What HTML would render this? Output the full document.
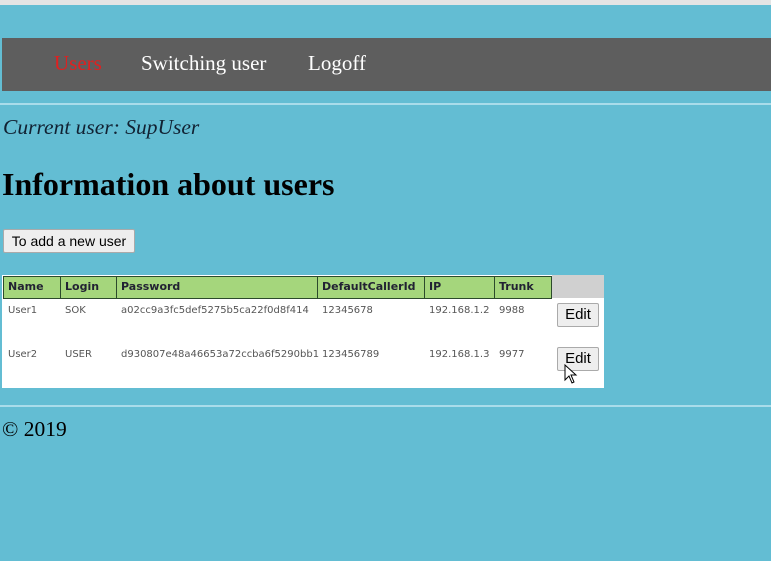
<html><head><style>
body{margin:0;width:771px;height:561px;background:#63bdd3;position:relative;overflow:hidden;font-family:"Liberation Serif",serif}
.a{position:absolute}
.t{font-family:"DejaVu Sans",sans-serif;font-size:10px;color:#555}
.h{font-family:"DejaVu Sans",sans-serif;font-size:11px;font-weight:bold;color:#223;background:#a5d67c;border:1px solid #2c4a2c;box-sizing:border-box;height:23px;top:276px;padding:3px 4px}
.b{font-family:"Liberation Sans",sans-serif;font-size:14px;background:#eee;border:1px solid #aaa;border-radius:2px;box-sizing:border-box;text-align:center}
</style></head><body>
<div class="a" style="left:0;top:0;width:771px;height:5px;background:#e4e4e4"></div>
<div class="a" style="left:2px;top:38px;width:769px;height:53px;background:#5e5e5e"></div>
<div class="a" style="left:54px;top:51px;font-size:21px;color:#e02020">Users</div>
<div class="a" style="left:141px;top:51px;font-size:21px;color:#fff">Switching user</div>
<div class="a" style="left:308px;top:51px;font-size:21px;color:#fff">Logoff</div>
<div class="a" style="left:0;top:103px;width:771px;height:2px;background:#a9dcea"></div>
<div class="a" style="left:3px;top:115px;font-size:21.5px;font-style:italic;color:#123">Current user: SupUser</div>
<div class="a" style="left:2px;top:166px;font-size:32px;font-weight:bold;color:#000">Information about users</div>
<div class="a b" style="left:3px;top:229px;width:132px;height:24px;line-height:22px">To add a new user</div>
<div class="a" style="left:2px;top:275px;width:602px;height:113px;background:#fff"></div>
<div class="a" style="left:552px;top:275px;width:52px;height:23px;background:#d0d0d0"></div>
<div class="a h" style="left:3px;width:58px">Name</div>
<div class="a h" style="left:60px;width:57px">Login</div>
<div class="a h" style="left:116px;width:202px">Password</div>
<div class="a h" style="left:317px;width:108px">DefaultCallerId</div>
<div class="a h" style="left:424px;width:71px">IP</div>
<div class="a h" style="left:494px;width:58px">Trunk</div>
<div class="a t" style="left:8px;top:305px">User1</div>
<div class="a t" style="left:65px;top:305px">SOK</div>
<div class="a t" style="left:121px;top:305px">a02cc9a3fc5def5275b5ca22f0d8f414</div>
<div class="a t" style="left:322px;top:305px">12345678</div>
<div class="a t" style="left:429px;top:305px">192.168.1.2</div>
<div class="a t" style="left:499px;top:305px">9988</div>
<div class="a b" style="left:557px;top:303px;width:42px;height:24px;line-height:22px;font-size:15px">Edit</div>
<div class="a t" style="left:8px;top:349px">User2</div>
<div class="a t" style="left:65px;top:349px">USER</div>
<div class="a t" style="left:121px;top:349px">d930807e48a46653a72ccba6f5290bb1</div>
<div class="a t" style="left:322px;top:349px">123456789</div>
<div class="a t" style="left:429px;top:349px">192.168.1.3</div>
<div class="a t" style="left:499px;top:349px">9977</div>
<div class="a b" style="left:557px;top:347px;width:42px;height:24px;line-height:22px;font-size:15px">Edit</div>
<svg class="a" style="left:564px;top:364px" width="16" height="22"><path d="M1 1 L1 16 L5 12 L8 19 L10 18 L7 11 L12 11 Z" fill="#fff" stroke="#000" stroke-width="1"/></svg>
<div class="a" style="left:0;top:405px;width:771px;height:2px;background:#a9dcea"></div>
<div class="a" style="left:2px;top:417px;font-size:21.5px;color:#000">© 2019</div>
</body></html>
